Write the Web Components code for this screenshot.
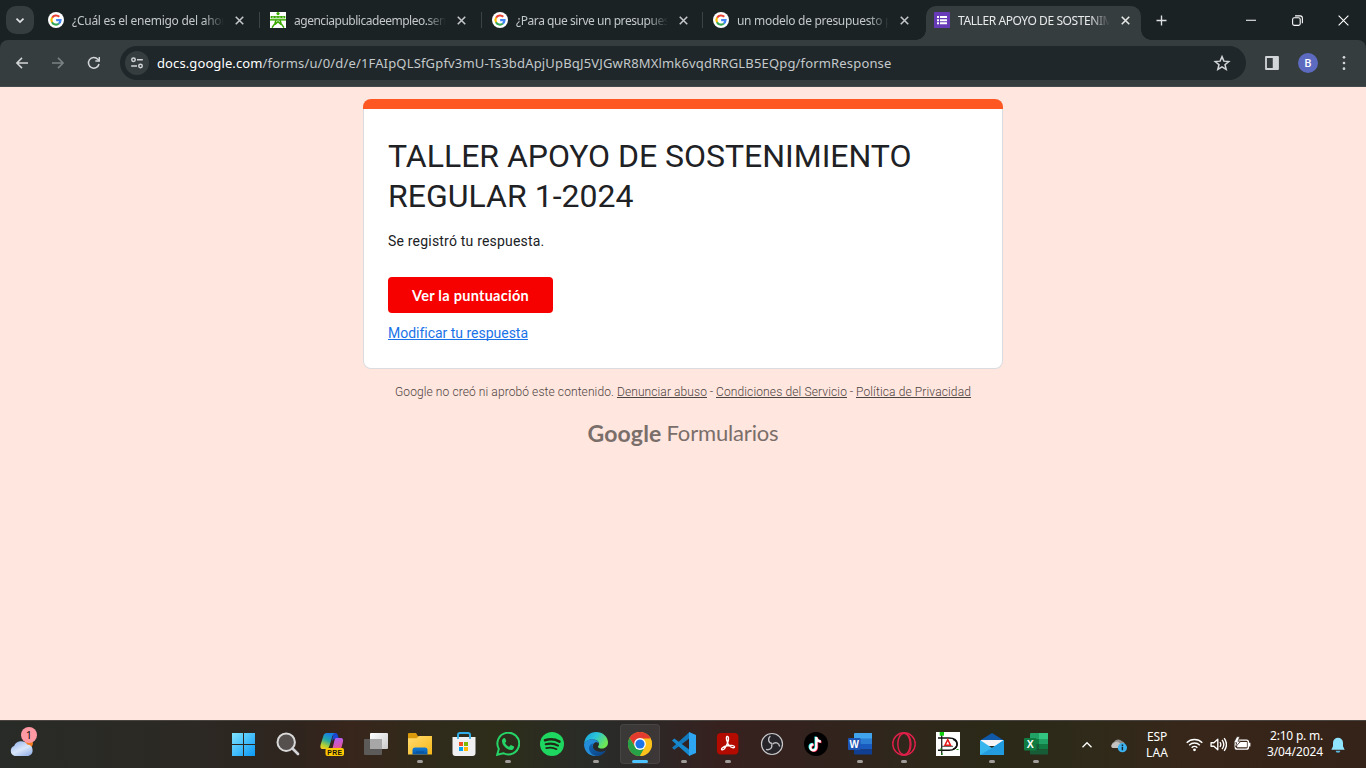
<!DOCTYPE html>
<html lang="es">
<head>
<meta charset="utf-8">
<title>TALLER APOYO DE SOSTENIMIENTO REGULAR 1-2024</title>
<style>
html,body{margin:0;height:100%;overflow:hidden}
body{font-family:"Noto Sans",sans-serif}
</style>
</head>
<body>
<desktop-screen></desktop-screen>
<script>
const define = (name, css, html, setup) => customElements.define(name, class extends HTMLElement {
  connectedCallback() {
    if (this.shadowRoot) return;
    const root = this.attachShadow({mode: 'open'});
    root.innerHTML = `<style>*{box-sizing:border-box}${css}</style>${typeof html === 'function' ? html(this) : html}`;
    if (setup) setup(this, root);
  }
});

/* Single line of text tracked to a given width */
define('fit-text', `:host{display:inline-block;white-space:nowrap}span{display:inline-block;white-space:nowrap}:host([line]) span{text-decoration:underline;text-decoration-thickness:1px;text-underline-offset:1px;text-decoration-skip-ink:none}`,
  '<span><slot></slot></span>', (el, root) => {
    const span = root.querySelector('span');
    const natural = span.getBoundingClientRect().width;
    const n = el.textContent.length;
    span.style.letterSpacing = ((+el.getAttribute('w') - natural) / n) + 'px';
  });

const ICONS = {
  google: `<circle cx="12" cy="12" r="12" fill="#fff"/><g fill="none" stroke-width="3.2"><path d="M6.2 8.6A6.8 6.8 0 0 1 16.9 7.2" stroke="#ea4335"/><path d="M6.2 8.4a6.8 6.8 0 0 0 0 7.2" stroke="#fbbc05"/><path d="M6 15.3A6.8 6.8 0 0 0 16.4 17.2" stroke="#34a853"/><path d="M16.2 17.3A6.8 6.8 0 0 0 18.8 12.2H12.2" stroke="#4285f4"/></g>`,
  sena: `<rect width="24" height="24" fill="#fff"/><g fill="#39a900"><circle cx="12" cy="2.4" r="2.4"/><path d="M1 6h22v3.500H1z"/></g><path d="M3 7.800h3M8 7.800h3M13 7.800h3M18 7.800h3" stroke="#fff" stroke-width=".9"/><g fill="none" stroke="#39a900" stroke-width="2.200"><path d="M0 11.800h24"/><path d="M9 12l-1.500 5L3 23.500M15 12l1.500 5 4.500 6.500M7.500 18.500L12 14.500l4.500 4"/></g>`,
  forms: `<rect width="24" height="24" rx="1" fill="#673ab7"/><path d="M4.500 6h3v3h-3zM9 6h10.500v3H9zM4.500 10.700h3v3h-3zM9 10.700h10.500v3H9zM4.500 15.400h3v3h-3zM9 15.400h10.500v3H9z" fill="#fff"/>`,
  chevron: `<path d="M6 9.500l6 6 6-6" fill="none" stroke="currentColor" stroke-width="3"/>`,
  close: `<path d="M6 6l12 12M18 6L6 18" fill="none" stroke="currentColor" stroke-width="2.500"/>`,
  plus: `<path d="M12 4v16M4 12h16" stroke="currentColor" stroke-width="2.200"/>`,
  back: `<path d="M21 12H5M12 4.300L4.300 12l7.700 7.700" fill="none" stroke="currentColor" stroke-width="2.300"/>`,
  forward: `<path d="M3 12h16M12 4.300l7.700 7.700-7.700 7.700" fill="none" stroke="currentColor" stroke-width="2.300"/>`,
  reload: `<path d="M19.500 13.500A8 8 0 1 1 17.700 6.400L20 8.700" fill="none" stroke="currentColor" stroke-width="2.300"/><path d="M21 3v7h-7V7.800h4.800V3z" fill="currentColor"/>`,
  tune: `<g fill="none" stroke="currentColor" stroke-width="2.500"><circle cx="6" cy="6.500" r="3"/><path d="M12 6.500h10M2 17h10"/><circle cx="18" cy="17" r="3"/></g>`,
  star: `<path d="M12 3.500l2.500 6 6.500.5-5 4.200 1.600 6.300L12 17.200l-5.600 3.300L8 14.200 3 10l6.500-.5z" fill="none" stroke="currentColor" stroke-width="2"/>`,
  panel: `<path d="M4 4h16v16H4z" fill="none" stroke="currentColor" stroke-width="2.400" stroke-linejoin="round"/><path d="M13 4h7v16h-7z" fill="currentColor"/>`,
  dots: `<g fill="currentColor"><circle cx="12" cy="3.500" r="2"/><circle cx="12" cy="12" r="2"/><circle cx="12" cy="20.500" r="2"/></g>`,
  min: `<path d="M2 12.500h20" stroke="#fff" stroke-width="2"/>`,
  restore: `<g fill="none" stroke="#fff" stroke-width="2"><rect x="3" y="7" width="14" height="14" rx="3"/><path d="M7.500 3.500H17a4 4 0 0 1 4 4V17"/></g>`,
  winclose: `<path d="M3 3l18 18M21 3L3 21" stroke="#fff" stroke-width="2"/>`,
  weather: `<circle cx="19" cy="11" r="4" fill="#f47c20"/><path d="M5.500 23a5 5 0 0 1-.6-9.500A7.200 7.200 0 0 1 17.500 12a5.600 5.600 0 0 1 1 11z" fill="url(#cl)"/><defs><linearGradient id="cl" x2=".7" y2="1"><stop stop-color="#8caeea"/><stop offset=".6" stop-color="#d9e7fb"/><stop offset="1" stop-color="#9db8ea"/></linearGradient></defs>`,
  start: `<defs><linearGradient id="st" gradientUnits="userSpaceOnUse" x1="0" y1="0" x2="24" y2="24"><stop stop-color="#83e5ff"/><stop offset="1" stop-color="#0797f7"/></linearGradient></defs><path d="M0 1h11v11H0zM12 1h11v11H12zM0 13h11v11H0zM12 13h11v11H12z" fill="url(#st)"/>`,
  search: `<circle cx="10.200" cy="10.200" r="8.700" fill="#55504d" stroke="#d9d9d9" stroke-width="2"/><path d="M16.500 16.500l5.500 5.500" stroke="#d4d4d8" stroke-width="2.700" stroke-linecap="round"/>`,
  copilot: `<defs><linearGradient id="ca" x1=".5" x2=".1" y2="1"><stop stop-color="#1780e4"/><stop offset=".4" stop-color="#24a8a5"/><stop offset=".75" stop-color="#b2ce34"/><stop offset="1" stop-color="#ffd11c"/></linearGradient><linearGradient id="cb" x1=".8" y2="1"><stop stop-color="#b55cec"/><stop offset=".55" stop-color="#e2579d"/><stop offset="1" stop-color="#ff8a56"/></linearGradient></defs><path d="M13.500 1h2c1.200 0 2 .9 2.300 2L19 7h-4c-2 0-2.800 1.500-3.300 3z" fill="#1b46cf"/><path d="M6.800 1h8c-1.800 1-2.500 3-3 5L9.400 14c-.6 2-1.500 3-3.500 3H3c-2.700 0-3-2-2.300-4.500L3.500 3.500C4 2 5 1 6.800 1z" fill="url(#ca)"/><path d="M16.500 6h4c2.700 0 3 2 2.300 4.500L20.500 19c-.5 1.500-1.600 3-3.500 3H9.500c1.700-1 2.300-2.600 2.800-4.500L14.300 9c.5-2 1-3 2.200-3z" fill="url(#cb)"/><rect x="5.500" y="16" width="18.500" height="8" rx="2" fill="#ffc800"/><text x="14.800" y="22.600" text-anchor="middle" font-family="Liberation Sans" font-weight="700" font-size="6.800" letter-spacing=".4" fill="#17130a">PRE</text>`,
  tasks: `<defs><linearGradient id="tk" x2="1" y2="1"><stop stop-color="#fff"/><stop offset="1" stop-color="#c9c9c9"/></linearGradient></defs><rect x="6" y="1" width="18" height="16" rx="1" fill="url(#tk)"/><rect y="7" width="18" height="16" rx="1" fill="#606060" opacity=".92"/><rect x="6" y="7" width="12" height="10" fill="#a7a7a7"/>`,
  folder: `<defs><linearGradient id="fo" x2="1" y2="1"><stop stop-color="#ffdc70"/><stop offset="1" stop-color="#f8b719"/></linearGradient><linearGradient id="fb" x2="0" y2="1"><stop stop-color="#127cd6"/><stop offset="1" stop-color="#0755a5"/></linearGradient></defs><path d="M0 8V2q0-1 1-1h7l2 3.300h14V8z" fill="#d99a0c"/><path d="M0 6.200h8.500L11 4h13v18.500H0z" fill="url(#fo)"/><path d="M4.500 22.500V18q0-2.500 2.500-2.500h10q2.500 0 2.500 2.500v4.500z" fill="url(#fb)"/><path d="M8 19.500h8v1H8z" fill="#0a4b8e"/>`,
  store: `<path d="M6 7V3q0-2 2-2h8q2 0 2 2v4" fill="none" stroke="#31aee8" stroke-width="2"/><path d="M.5 5h23v16q0 3-3 3h-17q-3 0-3-3z" fill="#f0f0f0"/><path d="M6 7V3M18 7V3" stroke="#31aee8" stroke-width="1.600"/><path d="M7 10h4v4H7z" fill="#f25022"/><path d="M12 10h4v4h-4z" fill="#7fba00"/><path d="M7 15h4v4H7z" fill="#00a4ef"/><path d="M12 15h4v4h-4z" fill="#ffb900"/>`,
  whatsapp: `<path d="M1.200 22.800l1.600-5.900A10.900 10.900 0 1 1 7.200 21.200z" fill="none" stroke="#25d366" stroke-width="2"/><path d="M8 6c.6-.2 1 0 1.200.5l1 2.300c.1.400 0 .7-.2 1l-.9 1.100c.8 1.800 2.200 3.100 4.100 3.900l1.200-1.400c.3-.3.6-.4 1-.2l2.200 1.100c.5.3.6.6.5 1.100-.4 1.700-1.700 2.600-3.300 2.600-4.100-.5-8.200-4.200-8.800-8.500C5.900 7.800 6.700 6.400 8 6z" fill="#25d366"/>`,
  spotify: `<circle cx="12" cy="12" r="12" fill="#1ed760"/><g fill="none" stroke="#202916" stroke-linecap="round"><path d="M5 8.300c5-1.500 10.500-1 14.500 1.300" stroke-width="2.500"/><path d="M5.700 12.300c4.500-1.300 8.800-.7 12.300 1.300" stroke-width="2.100"/><path d="M6.200 16.100c3.700-1 7.400-.6 10.400 1.100" stroke-width="1.700"/></g>`,
  edge: `<defs><linearGradient id="ea" x2="1" y2=".5"><stop stop-color="#149ddd"/><stop offset=".5" stop-color="#2bc4d8"/><stop offset="1" stop-color="#6de654"/></linearGradient><linearGradient id="eb" x2="1" y2="1"><stop stop-color="#1267b5"/><stop offset="1" stop-color="#0c3f7e"/></linearGradient></defs><path d="M0 12C1 4 6 0 12 0c7 0 12 5 12 10.500 0 3.500-2.500 6-6 6-2.500 0-4-.8-4-1.800 0-.7 1-1.200 1-3C15 9 12 7.500 8.500 7.500 4 7.500 1 9.500 0 12z" fill="url(#ea)"/><path d="M0 12c1-3 4-4.700 8-4.700 3.500 0 6.500 1.700 6.700 4.200C13.500 10 12 10 11 10.500 7 12.500 8.500 20 14.500 23.700 6 25.500 0 20 0 12z" fill="#238dda"/><path d="M9 11.300C7.500 16 11 19.800 16 19.800c3 0 4.800-.9 6.200-1.800C20 22 16.500 24 12.800 24 8 23.500 4.500 19.500 5 15.500c.3-2 2-3.500 4-4.200z" fill="url(#eb)"/>`,
  chrome: `<circle cx="12" cy="12" r="12" fill="#fbc116"/><path d="M1.600 6A12 12 0 0 1 22.400 6L22.400 7H12L7 14.500z" fill="#e33b2e"/><path d="M1.600 6A12 12 0 0 0 12 24l5-9-5 2-5-2.500z" fill="#26a148"/><path d="M12 6.500h10.600A12 12 0 0 1 12 24l5-9z" fill="#fcc21b"/><circle cx="12" cy="12" r="5.900" fill="#fff"/><circle cx="12" cy="12" r="4.600" fill="#1b73e8"/>`,
  vscode: `<path d="M17.500 0L0 15.700l2.300 2L17.500 6.300z" fill="#1279bd"/><path d="M2.300 6.500L0 8.500 17.500 24v-6.300z" fill="#1688ce"/><path d="M17 0l7 3v18l-7 3z" fill="#2da5f1"/>`,
  acrobat: `<rect x=".9" y="1" width="21.500" height="21.500" rx="4" fill="#b30b00"/><path d="M11 4.500c2-.5 1.800 3.500.5 6.500-1.200 3-3.500 7.500-5.500 6.800-1.600-.8 1.300-3.300 5-4 3.300-.7 7.300-.8 7.500 1 .1 1.700-3.700.9-5.700-1.700C11 11 9.600 5 11 4.500z" fill="none" stroke="#fff" stroke-width="1.400"/>`,
  obs: `<circle cx="12" cy="12" r="10.500" fill="#262429" stroke="#c9c9cc" stroke-width="1.200"/><g fill="none" stroke="#bdbdc1" stroke-width="1.400"><path d="M12 11.500c-4-1-4.300-5-1.700-7.400"/><path d="M12 11.500c-4-1-4.300-5-1.700-7.400" transform="rotate(120 12 12)"/><path d="M12 11.500c-4-1-4.300-5-1.700-7.400" transform="rotate(240 12 12)"/></g>`,
  tiktok: `<circle cx="12" cy="12" r="12" fill="#000"/><g fill="none" stroke-width="2.300"><path d="M12.300 5v10.300a3 3 0 1 1-3-3M12.300 5.500c.4 2.500 2 3.800 4.500 4" stroke="#25f4ee" transform="translate(-.7 -.5)"/><path d="M12.300 5v10.300a3 3 0 1 1-3-3M12.300 5.500c.4 2.500 2 3.800 4.500 4" stroke="#fe2c55" transform="translate(.7 .5)"/><path d="M12.300 5v10.300a3 3 0 1 1-3-3M12.300 5.500c.4 2.500 2 3.800 4.500 4" stroke="#fff"/></g>`,
  word: `<path d="M6 2q0-1 1-1h17v6H6z" fill="#41a5ee"/><path d="M6 6.500h18V12H6z" fill="#2b7cd3"/><path d="M6 12h18v5.500H6z" fill="#185abd"/><path d="M6 17.500h18v5H7q-1 0-1-1z" fill="#103f91"/><rect y="6" width="12.500" height="12" rx="1" fill="#1d55b5"/><text x="6.200" y="15.600" text-anchor="middle" font-family="Liberation Sans" font-weight="700" font-size="10" fill="#fff">W</text>`,
  opera: `<g fill="none" stroke="#e0204a"><circle cx="12" cy="12" r="11.200" stroke-width="1.400"/><ellipse cx="12" cy="12" rx="6.200" ry="10.800" stroke-width="1.400"/><path d="M14.500 1.500c6 4 6 17 0 21" stroke-width="1.200"/></g>`,
  dia: `<rect width="24" height="24" fill="#fff"/><path d="M5.700 3v20" stroke="#222" stroke-width="1.300"/><path d="M2 6h11c5.500 0 8 2.500 8 6s-3 6.300-8 6.300H2" fill="none" stroke="#111" stroke-width="1.500"/><path d="M17 7.200c5.500 2 5.500 8 0 10" fill="none" stroke="#111" stroke-width="1.500"/><path d="M6 14.300h11" stroke="#444" stroke-width="1"/><path d="M11.700 7.700l2.800 5.500H9z" fill="none" stroke="#e81818" stroke-width="1.500"/><rect x="3.700" y="0" width="4.300" height="3.700" fill="#10d010"/><path d="M5 16v2.500M20.500 17.500h2M6 21v2" stroke="#10a010"/>`,
  mail: `<path d="M0 8.500L12 1l12 7.500V11H0z" fill="#0f59a8"/><path d="M1 8h22v6H1z" fill="#f4f4f6"/><path d="M0 8l12 8L24 8v15H0z" fill="#37b6ee"/><path d="M24 8v15L12 16z" fill="#209be0"/><path d="M0 23l12-7 12 7z" fill="#1885d4" opacity=".55"/>`,
  excel: `<path d="M6 2q0-1 1-1h8v6H6z" fill="#21a366"/><path d="M15 1h9v6h-9z" fill="#33c481"/><path d="M6 7h9v5H6z" fill="#107c41"/><path d="M15 7h9v5h-9z" fill="#21a366"/><path d="M6 12h9v5.500H6z" fill="#185c37"/><path d="M15 12h9v5.500h-9z" fill="#107c41"/><path d="M6 17.500h18v5H7q-1 0-1-1z" fill="#185c37"/><rect y="6" width="12.500" height="12.500" rx="1" fill="#107c41"/><text x="6.200" y="15.900" text-anchor="middle" font-family="Liberation Sans" font-weight="700" font-size="10.500" fill="#fff">X</text>`,
  up: `<path d="M3 16.500l9-9 9 9" fill="none" stroke="#fff" stroke-width="2.600"/>`,
  onedrive: `<path d="M5.500 17a4.500 4.500 0 0 1 0-8.500A7 7 0 0 1 17 7.500a5 5 0 0 1 1 9.500z" fill="#8f8e8b"/><path d="M1.500 14c2-4 7-7 10-5.500L20 14l-2 3H5.500C3 17 1.800 15.800 1.500 14z" fill="#c4c3c1"/><circle cx="17.500" cy="16.500" r="6.500" fill="#3cb2ee"/><path d="M17.500 15v5M17.500 12v2" stroke="#123" stroke-width="2"/>`,
  wifi: `<g fill="none" stroke="#fff" stroke-width="1.900"><path d="M1 9.500a15.500 15.500 0 0 1 22 0M4.500 13a10.600 10.600 0 0 1 15 0M8 16.500a5.700 5.700 0 0 1 8 0"/></g><circle cx="12" cy="19.500" r="2" fill="#fff"/>`,
  sound: `<g fill="none" stroke="#fff" stroke-width="1.900"><path d="M1.500 9.500h4l5.500-5v15l-5.500-5h-4z" stroke-linejoin="round"/><path d="M14 8.500q2.500 3.500 0 7M17 5.500q5 6.500 0 13M20 3q6.500 9 0 18"/></g>`,
  battery: `<rect x="3" y="5.500" width="17.500" height="12" rx="2.500" fill="none" stroke="#fff" stroke-width="1.900"/><path d="M10 8h8.500v7H5.500v-3z" fill="#fff"/><path d="M22 9v5" stroke="#fff" stroke-width="2.400"/><path d="M5 1L1 9h4l-2 6 7-8H6.500L9 1z" fill="#fff" stroke="#2e2219" stroke-width=".8"/>`,
  bell: `<path d="M12 1a7.500 7.500 0 0 1 7.500 7.500V14l2.500 5H2l2.500-5V8.500A7.500 7.500 0 0 1 12 1z" fill="#8fe4ff"/><path d="M8.500 20.500h7a3.500 3 0 0 1-7 0z" fill="#5bb9e0"/>`
};

define('app-icon', `:host{display:inline-block;flex:none;line-height:0}svg{display:block}`,
  el => { const s = el.getAttribute('size') || 16; return `<svg width="${s}" height="${s}" viewBox="0 0 24 24">${ICONS[el.getAttribute('name')]}</svg>`; });

define('browser-tab', `
  :host{display:flex;position:relative;width:221px;height:34px;margin-top:6px;padding:0 0 0 8px;align-items:center;color:#c3c8ca;font-size:12px;flex:none}
  :host([wide]){width:222px}
  :host([sep])::after{content:"";position:absolute;right:2px;top:6px;width:1.500px;height:16px;background:#3b4346}
  app-icon{margin-top:-6px}
  .title{width:157px;flex:none;margin-left:8px;height:28px;line-height:28px;overflow:hidden;margin-top:-5px;-webkit-mask:linear-gradient(90deg,#000 132px,transparent 152px);mask:linear-gradient(90deg,#000 132px,transparent 152px)}
  .x{margin-left:3px}
  .fill,.l,.r{display:none}
  :host([active]) .fill{display:block;position:absolute;left:0;right:6px;top:0;bottom:0;background:#363d3f;border-radius:10px 10px 0 0}
  :host([active]) .l,:host([active]) .r{display:block;position:absolute;bottom:0;width:10px;height:10px}
  .l{left:-10px;background:radial-gradient(circle at 0 0,transparent 9.500px,#363d3f 10px)}
  .r{right:-4px;background:radial-gradient(circle at 100% 0,transparent 9.500px,#363d3f 10px)}
  app-icon,.title{position:relative}
  :host([active]){color:#e8eaea}`,
  el => `<div class="fill"></div><div class="l"></div><div class="r"></div><app-icon name="${el.getAttribute('icon')}" size="16"></app-icon><div class="title"><fit-text w="${el.getAttribute('w')}">${el.getAttribute('label')}</fit-text></div><app-icon class="x" name="close" size="15"></app-icon>`);

define('tab-strip', `
  :host{display:flex;height:40px;background:#1b2224;padding-left:6px;color:#dfe2e3}
  .menu{width:28px;height:28px;margin:6px 6px 0 0;border-radius:10px;background:#363d3f;display:grid;place-items:center;flex:none}
  .new{width:28px;height:40px;display:grid;place-items:center}
  .win{margin-left:auto;display:flex}
  .win div{width:46px;height:40px;display:grid;place-items:center}`,
  `<div class="menu"><app-icon name="chevron" size="14"></app-icon></div>
  <browser-tab wide sep icon="google" w="154" label="¿Cuál es el enemigo del ahor"></browser-tab>
  <browser-tab wide sep icon="sena" w="152" label="agenciapublicadeempleo.sen"></browser-tab>
  <browser-tab sep icon="google" w="153" label="¿Para que sirve un presupues"></browser-tab>
  <browser-tab icon="google" w="155" label="un modelo de presupuesto p"></browser-tab>
  <browser-tab active icon="forms" w="155" label="TALLER APOYO DE SOSTENIM"></browser-tab>
  <div class="new"><app-icon name="plus" size="15"></app-icon></div>
  <div class="win"><div><app-icon name="min" size="12"></app-icon></div><div><app-icon name="restore" size="13"></app-icon></div><div><app-icon name="winclose" size="13"></app-icon></div></div>`);

define('address-bar', `
  :host{display:flex;height:47px;align-items:center;background:#363d3f;padding:0 14px 0 14px;color:#d3d6d8;border-radius:8px 8px 0 0;border-bottom:1px solid #454b4c;box-sizing:border-box}
  .nav{display:flex;gap:20px;width:106px;flex:none}
  .nav .off{color:#7c8284}
  .box{height:34px;width:1126px;flex:none;border-radius:17px;background:#1f272a;display:flex;align-items:center;padding:0 15px 0 5px}
  .site{width:24px;height:24px;border-radius:50%;background:#363d3f;display:grid;place-items:center;margin-right:8px}
  .url{font-size:13px;color:#c5c9cb;white-space:nowrap;display:flex}.url .h{color:#fff}
  .box .s{margin-left:auto}
  .p{margin-left:17px}
  .a{width:20px;height:20px;flex:none;border-radius:50%;background:#5c6bc0;color:#fff;font:500 11px Roboto,sans-serif;display:grid;place-items:center;margin:0 18px 0 17px}`,
  `<div class="nav"><app-icon name="back" size="16"></app-icon><app-icon class="off" name="forward" size="16"></app-icon><app-icon name="reload" size="16"></app-icon></div>
  <div class="box"><div class="site"><app-icon name="tune" size="14"></app-icon></div>
  <div class="url"><fit-text class="h" w="105.500">docs.google.com</fit-text><fit-text w="629">/forms/u/0/d/e/1FAIpQLSfGpfv3mU-Ts3bdApjUpBqJ5VJGwR8MXlmk6vqdRRGLB5EQpg/formResponse</fit-text></div>
  <app-icon class="s" name="star" size="18"></app-icon></div>
  <app-icon class="p" name="panel" size="18"></app-icon><div class="a">B</div><app-icon name="dots" size="16"></app-icon>`);

define('form-card', `
  :host{display:block;width:640px;height:270px;background:#fff;border:1px solid #dadce0;border-top:0;border-radius:8px;position:relative;box-sizing:border-box;color:#202124;font-family:Roboto,sans-serif;padding:37px 24px 0}
  .bar{position:absolute;left:-1px;right:-1px;top:0;height:10px;border-radius:8px 8px 0 0;background:#ff5722}
  h1{margin:0;font-weight:400;font-size:32px;line-height:40px}
  p{margin:15px 0 0;font-size:14px;line-height:20px}
  button{display:block;margin:26px 0 0;width:165px;height:36px;border:0;padding:0;border-radius:4px;background:#f60000;color:#fff;font:700 14.500px Lato,sans-serif}
  a{display:block;margin-top:10px;font-size:14px;line-height:20px;color:#1a73e8}`,
  `<div class="bar"></div><h1><fit-text w="523.500">TALLER APOYO DE SOSTENIMIENTO</fit-text><br><fit-text w="245.500">REGULAR 1-2024</fit-text></h1>
  <p><fit-text w="156.500">Se registró tu respuesta.</fit-text></p>
  <button><fit-text w="117">Ver la puntuación</fit-text></button>
  <a><fit-text line w="139.500">Modificar tu respuesta</fit-text></a>`);

define('form-footer', `
  :host{display:flex;flex-direction:column;align-items:center;width:640px;font-family:Roboto,sans-serif;color:#5e5350}
  .legal{display:flex;margin-top:15px;font-size:12px;line-height:16px;white-space:pre;font-weight:300;color:#4d4340}
  .logo{display:flex;margin-top:17px;font-family:Lato,sans-serif;font-size:22px;line-height:32px;color:#7a6e6a}
  .logo .g{font-weight:700;margin-right:5px;font-size:23px}`,
  `<div class="legal"><fit-text w="222">Google no creó ni aprobó este contenido.&nbsp;</fit-text><fit-text line w="90">Denunciar abuso</fit-text><fit-text w="9">&nbsp;-&nbsp;</fit-text><fit-text line w="131">Condiciones del Servicio</fit-text><fit-text w="9">&nbsp;-&nbsp;</fit-text><fit-text line w="115">Política de Privacidad</fit-text></div>
  <div class="logo"><fit-text class="g" w="74">Google</fit-text><fit-text w="112">Formularios</fit-text></div>`);

define('task-app', `
  :host{display:flex;width:44px;height:47px;padding-bottom:1px;box-sizing:border-box;align-items:center;justify-content:center;position:relative;flex:none}
  :host([active])::before{content:"";position:absolute;inset:3px 2px 4px;border-radius:4px;background:#ffffff14;border:1px solid #ffffff10}
  app-icon{position:relative}
  i{display:none;position:absolute;left:19px;bottom:5px;width:6px;height:3px;border-radius:2px;background:#a09c99}
  :host([open]) i{display:block}
  :host([active]) i{display:block;left:14px;width:16px;background:#4cc2ff}`,
  el => `<app-icon name="${el.getAttribute('name')}" size="24"></app-icon><i></i>`);

const open = new Set(['folder','whatsapp','edge','vscode','acrobat','word','opera','mail','excel']);
define('task-bar', `
  :host{display:flex;height:48px;box-sizing:border-box;align-items:center;border-top:1px solid #49443f;color:#fff;font-size:12px;background:linear-gradient(90deg,#282b27 0,#2c2924 180px,#2e251e 290px,#38251b 350px,#302b1b 430px,#2d2d1a 500px,#292b29 600px,#2c2727 650px,#37211e 720px,#33221e 800px,#2f271b 900px,#2b2918 1000px,#2f2a19 1090px,#38261a 1200px,#352218 1366px)}
  .w{position:relative;width:26px;height:47px;margin-left:9px;display:flex;align-items:center;flex:none}
  .badge{position:absolute;left:12px;top:6px;width:16px;height:16px;border-radius:50%;background:#ff99a4;color:#111;font-size:11px;line-height:16px;text-align:center}
  .apps{display:flex;margin-left:187px}
  .tray{display:flex;align-items:center;margin-left:23px}
  .two{line-height:16px;margin-top:-1px}
  .lang{width:22px;margin:0 18px 0 19px;text-align:center}
  .clock{width:58px;margin-left:14px;margin-right:7px}
  .two>div{display:flex;justify-content:center}.clock>div{justify-content:flex-end}`,
  `<div class="w"><app-icon name="weather" size="25"></app-icon><div class="badge">1</div></div>
  <div class="apps">${['start','search','copilot','tasks','folder','store','whatsapp','spotify','edge','chrome','vscode','acrobat','obs','tiktok','word','opera','dia','mail','excel'].map(n => `<task-app name="${n}" ${n==='chrome'?'active':open.has(n)?'open':''}></task-app>`).join('')}</div>
  <div class="tray"><app-icon name="up" size="12"></app-icon><app-icon name="onedrive" size="17" style="margin-left:17px"></app-icon>
  <div class="two lang"><div><fit-text w="20">ESP</fit-text></div><div><fit-text w="22">LAA</fit-text></div></div>
  <app-icon name="wifi" size="17"></app-icon><app-icon name="sound" size="17" style="margin-left:7px"></app-icon><app-icon name="battery" size="18" style="margin-left:6px"></app-icon>
  <div class="two clock"><div><fit-text w="53">2:10 p. m.</fit-text></div><div><fit-text w="56">3/04/2024</fit-text></div></div>
  <app-icon name="bell" size="16"></app-icon></div>`);

define('desktop-screen', `
  :host{display:flex;flex-direction:column;width:1366px;height:768px;background:#ffe6df;overflow:hidden}
  .chrome{background:#1b2224}
  main{flex:1;display:flex;flex-direction:column;align-items:center;padding-top:12px}`,
  `<div class="chrome"><tab-strip></tab-strip><address-bar></address-bar></div><main><form-card></form-card><form-footer></form-footer></main><task-bar></task-bar>`);
</script>
</body>
</html>
